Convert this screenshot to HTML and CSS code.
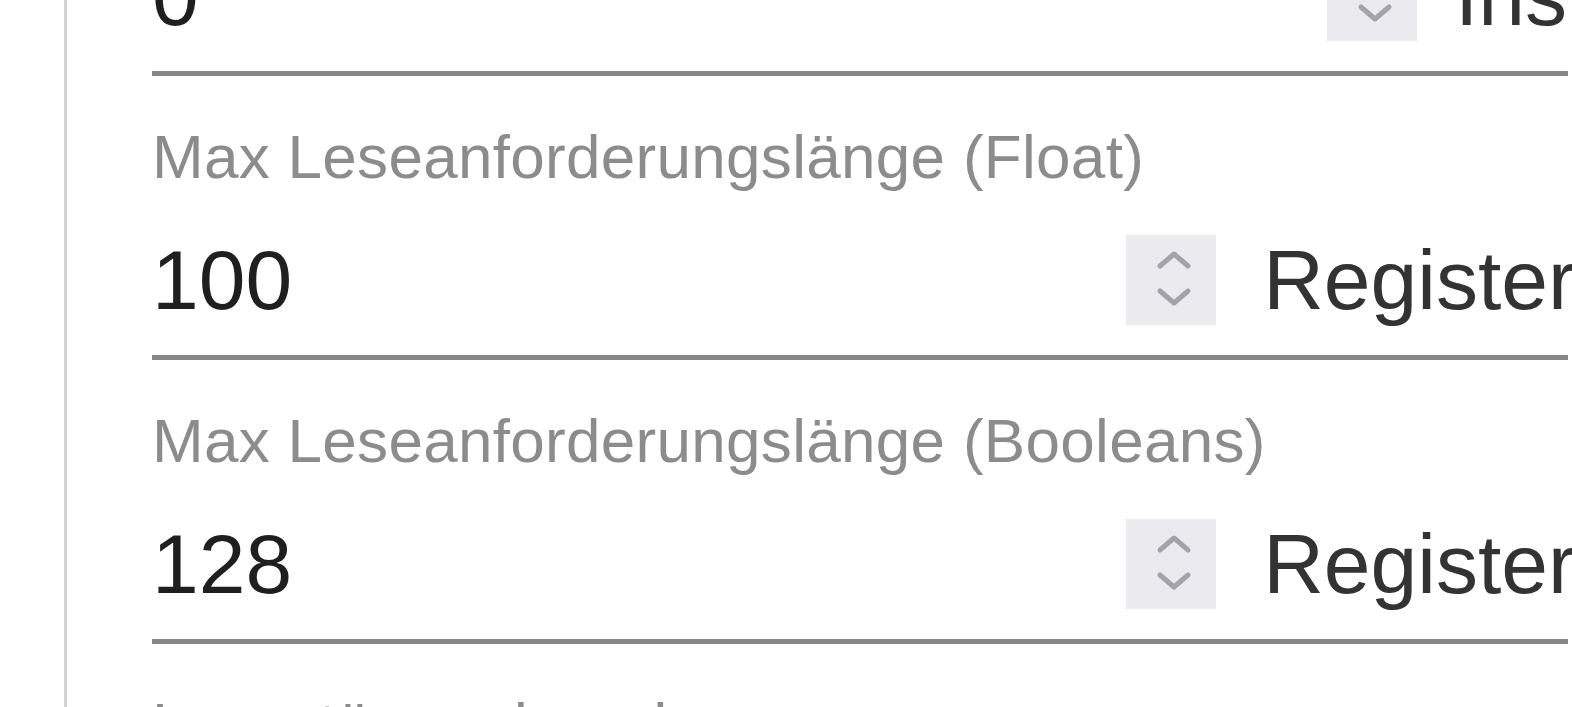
FILE: index.html
```html
<!DOCTYPE html>
<html lang="de">
<head>
<meta charset="utf-8">
<title>Modbus Einstellungen</title>
<link rel="stylesheet" href="styles.css">
</head>
<body>
<div class="page">
  <div class="pane">
    <form class="form">
      <div class="field">
        <label class="label">Startadresse</label>
        <div class="row">
          <span class="value">0</span>
          <span class="spin"><svg viewBox="0 0 90 90" width="90" height="90"><polyline points="34,31 48,19 62,31"/><polyline points="34,56 48,68 62,56"/></svg></span>
          <span class="unit unit-short">Instanzen</span>
        </div>
      </div>
      <div class="field">
        <label class="label">Max Leseanforderungslänge (Float)</label>
        <div class="row">
          <span class="value">100</span>
          <span class="spin"><svg viewBox="0 0 90 90" width="90" height="90"><polyline points="34,31 48,19 62,31"/><polyline points="34,56 48,68 62,56"/></svg></span>
          <span class="unit">Register</span>
        </div>
      </div>
      <div class="field">
        <label class="label">Max Leseanforderungslänge (Booleans)</label>
        <div class="row">
          <span class="value">128</span>
          <span class="spin"><svg viewBox="0 0 90 90" width="90" height="90"><polyline points="34,31 48,19 62,31"/><polyline points="34,56 48,68 62,56"/></svg></span>
          <span class="unit">Register</span>
        </div>
      </div>
      <div class="field">
        <label class="label">Lesestörung ignorieren</label>
        <div class="row">
          <span class="value">0</span>
          <span class="spin"><svg viewBox="0 0 90 90" width="90" height="90"><polyline points="34,31 48,19 62,31"/><polyline points="34,56 48,68 62,56"/></svg></span>
          <span class="unit">ms</span>
        </div>
      </div>
    </form>
  </div>
</div>
</body>
</html>
```
FILE: styles.css
```css
html {
  overflow: hidden;
  background: #ffffff;
}

html, body {
  margin: 0;
  padding: 0;
}

body {
  font-family: "Liberation Sans", Arial, sans-serif;
}

.page {
  height: 707px;
  padding-left: 64px;
  box-sizing: border-box;
}

.pane {
  display: flow-root;
  height: 100%;
  border-left: 3px solid #d3d3d3;
  padding-left: 85px;
}

.form {
  width: 1416px;
  margin: -208px 0 0 0;
}

.field {
  padding: 50px 0 30px 0;
  border-bottom: 5px solid #878787;
}

.label {
  display: block;
  font-size: 62px;
  line-height: 62px;
  letter-spacing: 0.3px;
  color: #8c8c8c;
  white-space: nowrap;
}

.row {
  display: flex;
  align-items: center;
  height: 90px;
  margin-top: 47px;
}

.value {
  flex: 1;
  font-size: 84px;
  line-height: 90px;
  color: #1f1f1f;
}

.spin {
  flex: none;
  display: block;
  width: 90px;
  height: 90px;
  background: #ebebef;
}

.spin svg {
  display: block;
  fill: none;
  stroke: #a3a3ab;
  stroke-width: 5;
  stroke-linecap: round;
  stroke-linejoin: round;
}

.unit {
  flex: none;
  margin-left: 47px;
  margin-right: -8px;
  font-size: 84px;
  line-height: 90px;
  color: #333333;
  white-space: nowrap;
}

.unit-short {
  width: 121px;
  margin-left: 38px;
}
```
